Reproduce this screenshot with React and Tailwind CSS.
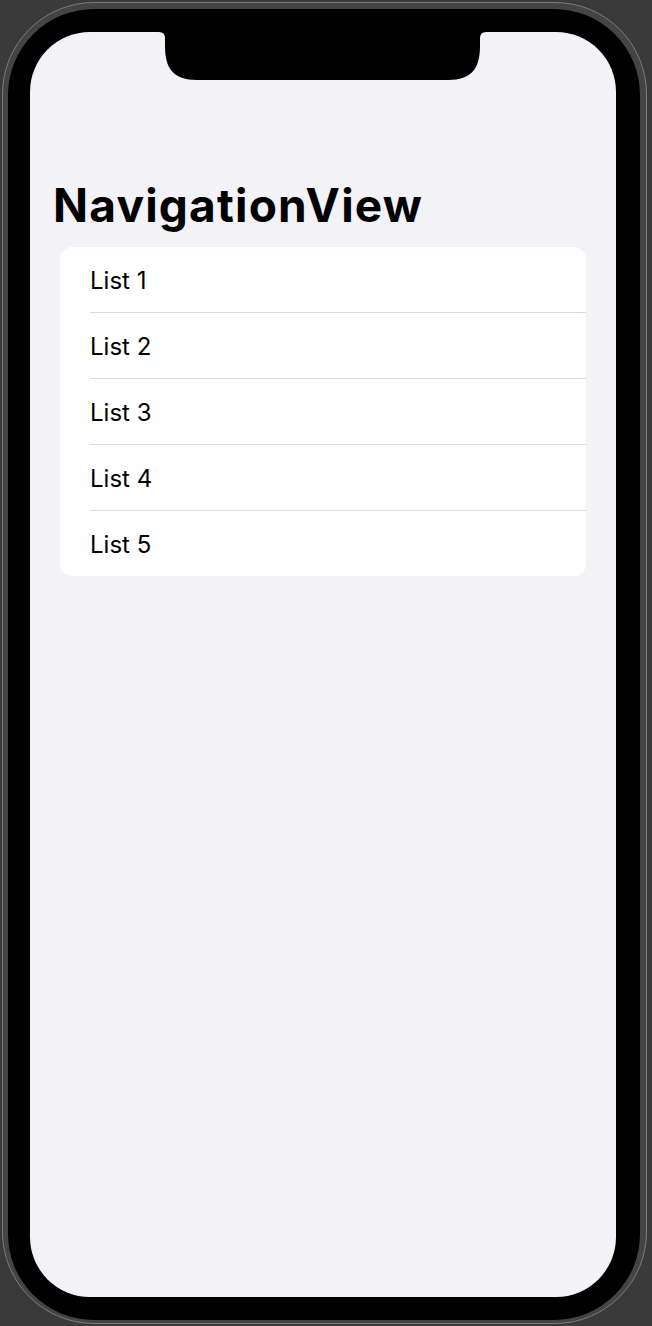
export default function App() {
  const items = ["List 1", "List 2", "List 3", "List 4", "List 5"];
  return (
    <div
      className="w-[652px] h-[1326px] bg-[#3a3a3a] pl-[2px] pt-[2px] overflow-hidden"
      style={{ fontFamily: 'Inter, "Noto Sans", sans-serif' }}
    >
      <div className="w-[645px] h-[1322px] rounded-[92px] border border-[#7c7c7c] bg-[#444444] pl-[5px] pr-[6px] pt-[6px] pb-[3px]">
        <div className="h-full rounded-[86px] bg-black pl-[22px] pr-[24px] pt-[23px] pb-[23px]">
          <div className="relative h-full rounded-[60px] bg-[#f2f2f7] overflow-hidden">
            <svg
              className="absolute left-[129px] top-0"
              width="327"
              height="48"
              viewBox="0 0 327 48"
            >
              <path
                d="M0 0 Q6 0 6 6 V14 C6 36 14 48 38 48 H289 C313 48 321 36 321 14 V6 Q321 0 327 0 Z"
                fill="#000"
              />
            </svg>
            <div className="flex flex-col pt-[150px]">
              <h1 className="px-[23px] text-[46px] leading-[46px] font-bold text-black tracking-[1.2px]">
                NavigationView
              </h1>
              <div className="mt-[19px] mx-[30px] bg-white rounded-[12px] overflow-hidden">
                {items.map((t, i) => (
                  <div key={t} className="pl-[30px]">
                    <div
                      className={
                        i < items.length - 1
                          ? "h-[66px] pt-[2px] flex items-center border-b border-[#dcdce0]"
                          : "h-[65px] pt-[2px] flex items-center"
                      }
                    >
                      <span className="text-[24px] text-black">{t}</span>
                    </div>
                  </div>
                ))}
              </div>
            </div>
          </div>
        </div>
      </div>
    </div>
  );
}
